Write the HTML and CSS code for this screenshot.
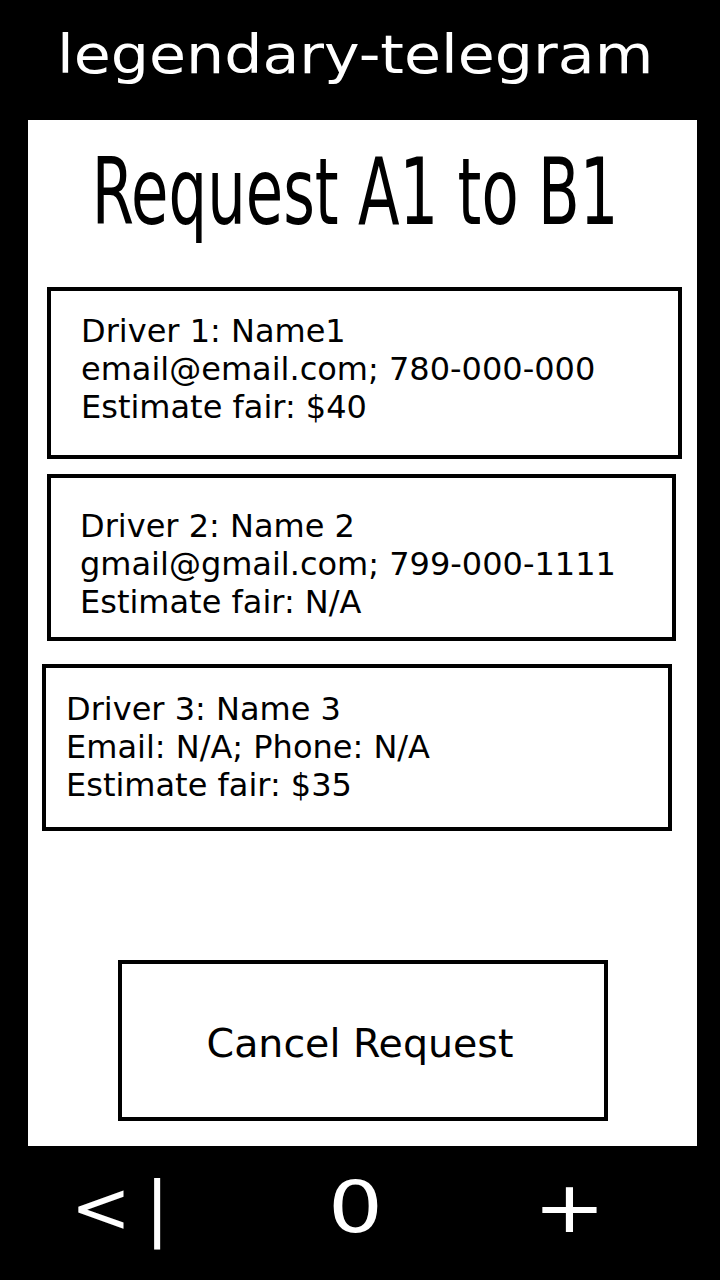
FILE: index.html
```html
<!DOCTYPE html>
<html lang="en">
<head>
<meta charset="utf-8">
<title>legendary-telegram</title>
<link rel="stylesheet" href="styles.css">
</head>
<body>
<div class="app">
  <header class="topbar"><span class="brand">legendary-telegram</span></header>
  <main class="panel">
    <div class="title"><h1 class="title-text">Request A1 to B1</h1></div>
    <section class="card card-1">
      <p class="line">Driver 1: Name1</p>
      <p class="line">email@email.com; 780-000-000</p>
      <p class="line">Estimate fair: $40</p>
    </section>
    <section class="card card-2">
      <p class="line">Driver 2: Name 2</p>
      <p class="line">gmail@gmail.com; 799-000-1111</p>
      <p class="line">Estimate fair: N/A</p>
    </section>
    <section class="card card-3">
      <p class="line">Driver 3: Name 3</p>
      <p class="line">Email: N/A; Phone: N/A</p>
      <p class="line">Estimate fair: $35</p>
    </section>
    <button class="cancel" type="button">Cancel Request</button>
  </main>
  <nav class="nav">
    <span class="nav-item nav-back">&lt;|</span>
    <span class="nav-item nav-home">0</span>
    <span class="nav-item nav-add">+</span>
  </nav>
</div>
</body>
</html>
```

FILE: styles.css
```css
* { box-sizing: border-box; }

html, body {
  margin: 0;
  padding: 0;
  background: #000;
}

body {
  width: 720px;
  height: 1280px;
  overflow: hidden;
  font-family: "DejaVu Sans", Verdana, sans-serif;
  color: #000;
}

.app {
  display: flex;
  flex-direction: column;
  height: 1280px;
}

.topbar {
  height: 120px;
  color: #fff;
  padding: 28px 0 0 57px;
}

.brand {
  display: inline-block;
  font-size: 54px;
  line-height: 54px;
  transform: scaleX(1.115);
  transform-origin: left center;
  white-space: nowrap;
}

.panel {
  background: #fff;
  margin: 0 23px 0 28px;
  height: 1026px;
  display: flex;
  flex-direction: column;
  align-items: flex-start;
}

.title {
  width: 100%;
  height: 167px;
  padding: 26px 14px 0 0;
  display: flex;
  justify-content: center;
}

.title-text {
  margin: 0;
  font-family: "DejaVu Sans Condensed", "DejaVu Sans", sans-serif;
  font-stretch: condensed;
  font-weight: normal;
  font-size: 93px;
  line-height: 93px;
  white-space: nowrap;
  transform: scaleX(0.727);
  transform-origin: center;
}

.card {
  border: 4px solid #000;
}

.line {
  margin: 0;
  font-size: 32px;
  line-height: 38px;
  white-space: nowrap;
}

.card-1 {
  margin-left: 19px;
  width: 635px;
  height: 172px;
  padding: 21px 0 0 30px;
}

.card-2 {
  margin-top: 15px;
  margin-left: 19px;
  width: 629px;
  height: 167px;
  padding: 29px 0 0 29px;
}

.card-3 {
  margin-top: 23px;
  margin-left: 14px;
  width: 630px;
  height: 167px;
  padding: 22px 0 0 20px;
}

.cancel {
  margin-top: 129px;
  margin-left: 90px;
  width: 490px;
  height: 161px;
  border: 4px solid #000;
  background: #fff;
  font-family: "DejaVu Sans", Verdana, sans-serif;
  font-size: 39.5px;
  color: #000;
  padding: 4px 6px 0 0;
  display: flex;
  align-items: center;
  justify-content: center;
}

.nav {
  flex: 1;
  display: flex;
  align-items: flex-start;
  color: #fff;
  font-size: 72px;
  line-height: 72px;
  padding-top: 25px;
}

.nav-item {
  display: block;
  text-align: center;
  white-space: nowrap;
}

.nav-back {
  width: 236px;
  letter-spacing: 14px;
  padding-left: 18px;
}

.nav-home {
  width: 239px;
  transform: scaleX(1.2);
}

.nav-add {
  width: 189px;
  transform: scaleX(1.2);
}
```
